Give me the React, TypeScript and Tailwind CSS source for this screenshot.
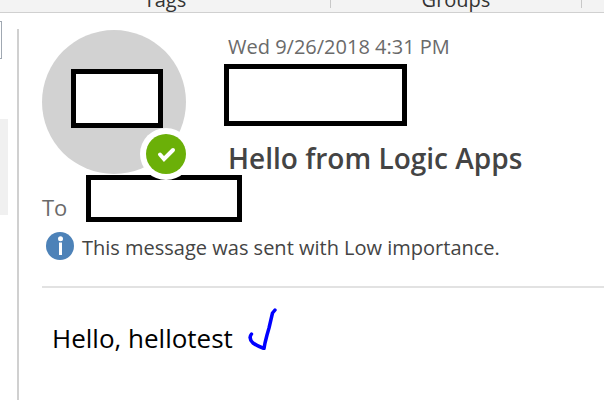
const segoe = "font-['Open_Sans','Noto_Sans',sans-serif]";

function RibbonGroup({ label, width }: { label?: string; width: string }) {
  return (
    <div className={`${width} flex h-2 shrink-0 items-end justify-center border-r border-[#c8c8c8]`}>
      <span className="text-[20px] leading-[16px] text-[#333]">{label}</span>
    </div>
  );
}

function Redacted({ size }: { size: string }) {
  return <div className={`${size} shrink-0 border-[5px] border-black bg-white`} />;
}

function Avatar() {
  return (
    <div className="relative flex size-36 shrink-0 items-center justify-center rounded-full bg-[#d2d2d2] pb-2 pl-1.5">
      <Redacted size="w-[92px] h-[59px]" />
      <div className="absolute -right-1.5 -bottom-1.5 rounded-full bg-white p-1.5">
        <svg viewBox="0 0 40 40" className="size-10" role="img" aria-label="Available">
          <circle cx="20" cy="20" r="20" fill="#6bb008" />
          <path d="M14 20.5 L18 25 L27 16" fill="none" stroke="#fff" strokeWidth="4" strokeLinecap="round" strokeLinejoin="miter" />
        </svg>
      </div>
    </div>
  );
}

function InfoIcon() {
  return (
    <svg viewBox="0 0 28 28" className="size-7 shrink-0" aria-hidden="true">
      <circle cx="14" cy="14" r="14" fill="#4d82b8" />
      <circle cx="14.5" cy="6.8" r="2.5" fill="#fff" />
      <path d="M14.5 10.5 V23" stroke="#fff" strokeWidth="3" />
    </svg>
  );
}

export default function App() {
  return (
    <div className={`${segoe} flex h-screen flex-col overflow-hidden bg-white`}>
      <nav className="flex h-[13px] shrink-0 items-start border-b border-[#d0d0d0] bg-[#f3f3f3]">
        <RibbonGroup label="Tags" width="w-[331px]" />
        <RibbonGroup label="Groups" width="w-[251px]" />
      </nav>
      <div className="flex min-h-0 flex-1">
        <aside className="w-[17px] shrink-0 pt-2">
          <div className="h-[38px] w-0.5 border-y border-r border-[#a0a8b2]" />
          <div className="mt-[60px] h-24 w-2 bg-[#f0f0f0]" />
        </aside>
        <main className="mt-4 min-w-0 flex-1 border-l-2 border-[#d0d0d0] pl-[23px]">
          <header className="border-b-2 border-[#e2e2e2] pb-[26px]">
            <div className="mt-px flex h-36">
              <Avatar />
              <div className="flex flex-col pl-[38px]">
                <time className="pl-1 text-[20px] leading-[34px] text-[#6a6a6a]">Wed 9/26/2018 4:31 PM</time>
                <Redacted size="w-[183px] h-[62px]" />
                <h1 className="pt-3 pl-1 text-[28px] leading-[40px] font-semibold text-[#444]">Hello from Logic Apps</h1>
              </div>
            </div>
            <div className="flex items-end pt-px">
              <span className="w-11 text-[22px] leading-[30px] text-[#6a6a6a]">To</span>
              <Redacted size="w-[156px] h-[47px]" />
            </div>
            <div className="flex items-center gap-2 pt-2.5 pl-1">
              <InfoIcon />
              <p className="pt-1 text-[20px] leading-[24px] text-[#444]">This message was sent with Low importance.</p>
            </div>
          </header>
          <article className="flex items-start pt-5 pl-2.5">
            <p className="pt-3 text-[26px] leading-[36px] text-black">Hello, hellotest</p>
            <svg viewBox="0 0 30 42" className="ml-3.5 h-[42px] w-[30px]" aria-hidden="true">
              <path d="M4.5 26 C2 29 3 32 6 35 C10 38 14 39.5 17 40.5 L18 35 L20 27 L22 20 L25.5 5 L28 2" fill="none" stroke="#00f" strokeWidth="3.5" strokeLinecap="round" strokeLinejoin="round" />
            </svg>
          </article>
        </main>
      </div>
    </div>
  );
}
